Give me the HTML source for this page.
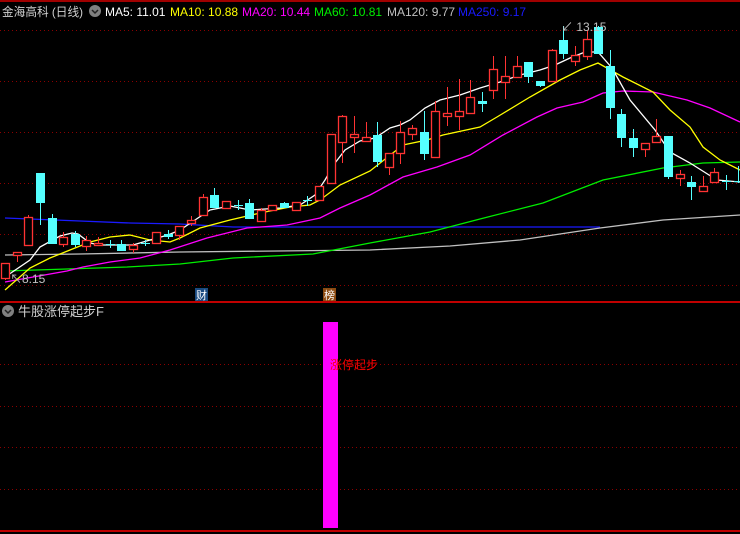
<!DOCTYPE html>
<html><head><meta charset="utf-8"><style>
html,body{margin:0;padding:0;background:#000;width:740px;height:534px;overflow:hidden}
svg{display:block}
text{font-family:"Liberation Sans","Noto Sans CJK SC",sans-serif}
</style></head><body>
<svg width="740" height="534" viewBox="0 0 740 534" xmlns="http://www.w3.org/2000/svg">
<rect width="740" height="534" fill="#000"/>
<line x1="0" y1="1" x2="740" y2="1" stroke="#a00000" stroke-width="2"/>
<line x1="0" y1="302" x2="740" y2="302" stroke="#c00000" stroke-width="2"/>
<line x1="0" y1="531" x2="740" y2="531" stroke="#c00000" stroke-width="2"/>
<g stroke="#8b0000" stroke-width="1" stroke-dasharray="1,3">
<line x1="0" y1="30.5" x2="740" y2="30.5"/><line x1="0" y1="81.5" x2="740" y2="81.5"/>
<line x1="0" y1="132.5" x2="740" y2="132.5"/><line x1="0" y1="183.5" x2="740" y2="183.5"/>
<line x1="0" y1="234.5" x2="740" y2="234.5"/><line x1="0" y1="285.5" x2="740" y2="285.5"/>
<line x1="0" y1="364.5" x2="740" y2="364.5"/><line x1="0" y1="406.5" x2="740" y2="406.5"/>
<line x1="0" y1="447.5" x2="740" y2="447.5"/><line x1="0" y1="489.5" x2="740" y2="489.5"/>
</g>
<g fill="none" stroke-width="1.3">
<polyline stroke="#1a1aff" points="5,218 80,221 130,223 180,224 233,227 370,227 600,227"/>
<polyline stroke="#c0c0c0" points="5,255 80,254 180,252 370,250 450,246 520,240 600,228 663,220 740,215"/>
<polyline stroke="#00ee00" points="5,271 67,269 127,267 180,264 233,258 313,254 370,243 430,232 480,219 543,203 603,180 663,168 703,163 740,162"/>
<polyline stroke="#ff00ff" points="5,282 67,271 83,267 110,262 140,258 170,250 207,238 247,228 287,225 320,218 340,208 370,195 403,177 437,167 470,155 503,135 537,117 557,108 583,102 603,93 623,91 653,92 687,100 710,108 740,122"/>
<polyline stroke="#ffff00" points="5,290 30,268 50,258 70,250 90,242 110,237 130,235 150,240 170,242 180,238 200,228 230,220 260,213 290,207 310,205 320,200 340,185 370,171 403,145 427,140 443,135 480,127 497,117 530,97 560,80 580,70 598,63 623,77 653,92 670,110 690,127 703,147 720,160 740,170"/>
<polyline stroke="#ffffff" points="5,277 30,260 40,247 60,236 72,233 78,234 90,243 100,245 133,245 150,240 168,235 180,230 195,220 210,210 230,206 250,210 280,208 300,205 315,195 325,180 335,163 345,150 360,141 375,138 390,128 400,125 410,120 425,108 440,100 460,95 480,88 500,82 520,75 540,70 555,65 570,58 585,52 598,52 612,68 630,100 655,130 670,152 690,163 717,180 740,182"/>
</g>
<g id="candles"></g>
<text x="10" y="283" fill="#c0c0c0" font-size="12">↖8.15</text>
<text x="561" y="31" fill="#c0c0c0" font-size="12">↙ 13.15</text>
<rect x="195" y="288" width="13" height="13" fill="#1a4a80"/>
<text x="196" y="299" fill="#fff" font-size="11">财</text>
<rect x="323" y="288" width="13" height="13" fill="#8b4a10"/>
<text x="324" y="299" fill="#fff" font-size="11">榜</text>
<text x="2" y="16" fill="#d0d0d0" font-size="12" textLength="81" lengthAdjust="spacingAndGlyphs">金海高科 (日线)</text>
<circle cx="95" cy="11" r="6" fill="#808080"/>
<polyline points="92,10 95,13 98,10" fill="none" stroke="#222" stroke-width="1.5"/>
<text x="105" y="16" fill="#fff" font-size="12">MA5: 11.01</text>
<text x="170" y="16" fill="#ffff00" font-size="12">MA10: 10.88</text>
<text x="242" y="16" fill="#ff00ff" font-size="12">MA20: 10.44</text>
<text x="314" y="16" fill="#00ee00" font-size="12">MA60: 10.81</text>
<text x="387" y="16" fill="#c0c0c0" font-size="12">MA120: 9.77</text>
<text x="458" y="16" fill="#1a1aff" font-size="12">MA250: 9.17</text>
<circle cx="8" cy="311" r="6" fill="#808080"/>
<polyline points="5,310 8,313 11,310" fill="none" stroke="#222" stroke-width="1.5"/>
<text x="18" y="316" fill="#d0d0d0" font-size="13">牛股涨停起步F</text>
<rect x="323" y="322" width="15" height="206" fill="#ff00ff"/>
<text x="330" y="369" fill="#ff0000" font-size="12">涨停起步</text>
</svg>
<script>
var d=[
[263,278,263,280,'r'],[252,255,252,262,'r'],[217,245,215,245,'r'],[173,203,173,225,'c'],[218,244,214,244,'c'],
[237,244,232,247,'r'],[234,245,231,247,'c'],[240,246,236,251,'r'],[243,245,237,246,'r'],[244,245,240,248,'c'],
[244,251,240,251,'c'],[245,249,243,253,'r'],[243,244,240,246,'c'],[232,243,232,243,'r'],[234,237,230,239,'c'],
[226,235,226,240,'r'],[220,223,216,226,'r'],[197,215,194,215,'r'],[195,208,188,208,'c'],[201,208,201,208,'r'],
[205,206,200,210,'c'],[203,219,199,219,'c'],[210,221,208,221,'r'],[205,210,205,210,'r'],[203,208,202,208,'c'],
[202,210,202,210,'r'],[200,201,196,206,'c'],[186,200,186,200,'r'],[134,183,134,183,'r'],[116,142,115,163,'r'],
[134,137,116,153,'r'],[137,141,122,141,'r'],[135,162,122,167,'c'],[153,167,153,175,'r'],[132,153,121,164,'r'],
[128,134,125,140,'r'],[132,154,111,160,'c'],[111,157,101,157,'r'],[113,116,87,126,'r'],[111,116,79,130,'r'],
[97,113,80,113,'r'],[101,104,92,112,'c'],[69,90,56,99,'r'],[76,82,56,99,'r'],[66,77,56,77,'r'],
[62,77,62,83,'c'],[81,86,81,87,'c'],[50,81,49,81,'r'],[40,54,26,59,'c'],[55,61,46,66,'r'],
[39,56,31,60,'r'],[27,54,26,54,'c'],[66,108,50,119,'c'],[114,138,109,147,'c'],[138,148,129,157,'c'],
[143,149,143,157,'r'],[136,142,119,142,'r'],[136,177,136,179,'c'],[174,178,170,186,'r'],[182,187,176,200,'c'],
[186,191,176,191,'r'],[172,182,168,182,'r'],[181,182,175,190,'c'],[181,182,166,183,'c']];
var g=document.getElementById('candles'),s='';
for(var i=0;i<d.length;i++){var x=Math.round(5+i*11.63),c=d[i],col=c[4]=='r'?'#ff3333':'#55ffff';
s+='<line x1="'+(x+0.5)+'" y1="'+c[2]+'" x2="'+(x+0.5)+'" y2="'+c[3]+'" stroke="'+col+'"/>';
var h=Math.max(1,c[1]-c[0]);
if(c[4]=='r')s+='<rect x="'+(x-3.5)+'" y="'+(c[0]+0.5)+'" width="8" height="'+h+'" fill="#000" stroke="'+col+'" stroke-width="1.3"/>';
else s+='<rect x="'+(x-4)+'" y="'+c[0]+'" width="9" height="'+h+'" fill="'+col+'"/>';}
g.innerHTML=s;
</script>
</body></html>
